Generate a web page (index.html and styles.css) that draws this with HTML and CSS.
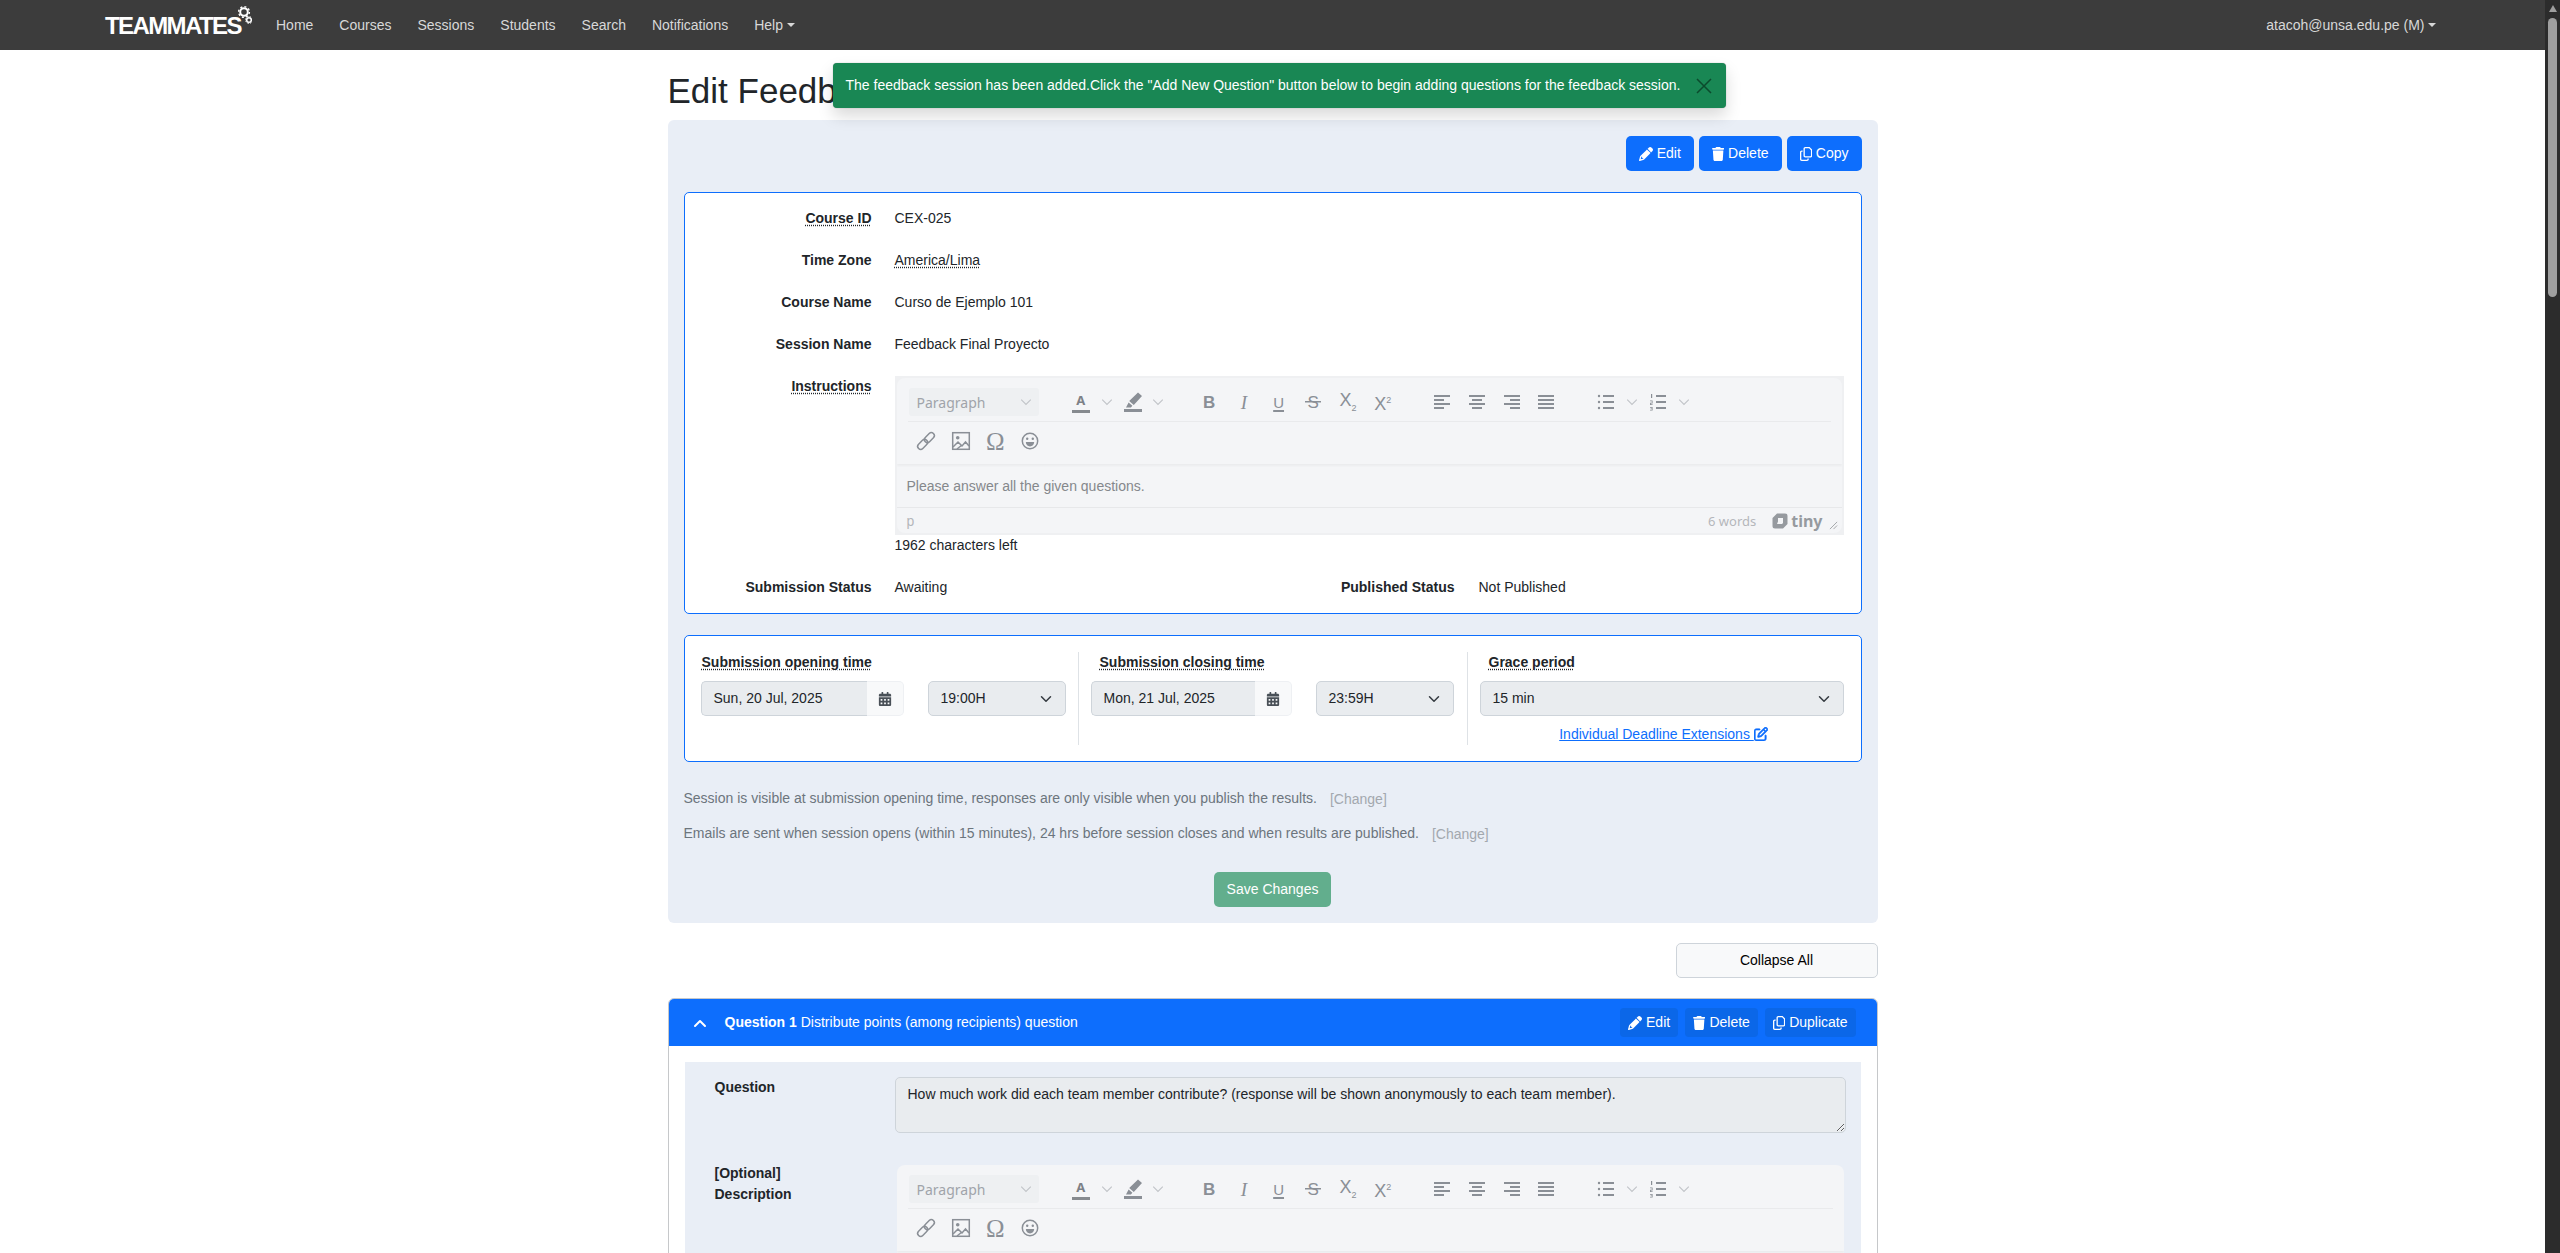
FILE: index.html
```html
<!DOCTYPE html>
<html>
<head>
  <meta charset="utf-8">
  <meta name="viewport" content="width=device-width">
  <link rel="stylesheet" href="styles.css">
  <title>Edit Feedback Session</title>
</head>
<body>
  <svg class="sprite" xmlns="http://www.w3.org/2000/svg">
    <symbol id="i-pencil" viewBox="0 0 512 512"><path fill="currentColor" d="M410.3 231l11.3-11.3-33.9-33.9-62.1-62.1L291.7 89.8l-11.3 11.3-22.6 22.6L58.6 322.9c-10.4 10.4-18 23.3-22.2 37.4L1 480.7c-2.5 8.4-.2 17.5 6.1 23.7s15.3 8.5 23.7 6.1l120.3-35.4c14.1-4.2 27-11.8 37.4-22.2L387.7 253.7 410.3 231zM160 399.4l-9.1 22.7c-4 3.1-8.5 5.4-13.3 6.9L59.4 452l23-78.1c1.4-4.9 3.8-9.4 6.9-13.3l22.7-9.1v32c0 8.8 7.2 16 16 16h32zM362.7 18.7L348.3 33.2 325.7 55.8 314.3 67.1l33.9 33.9 62.1 62.1 33.9 33.9 11.3-11.3 22.6-22.6 14.5-14.5c25-25 25-65.5 0-90.5L453.3 18.7c-25-25-65.5-25-90.5 0z"/></symbol>
    <symbol id="i-trash" viewBox="0 0 448 512"><path fill="currentColor" d="M135.2 17.7L128 32H32C14.3 32 0 46.3 0 64S14.3 96 32 96H416c17.7 0 32-14.3 32-32s-14.3-32-32-32H320l-7.2-14.3C307.4 6.8 296.3 0 284.2 0H163.8c-12.1 0-23.2 6.8-28.6 17.7zM416 128H32L53.2 467c1.6 25.3 22.6 45 47.9 45H346.9c25.3 0 46.3-19.7 47.9-45L416 128z"/></symbol>
    <symbol id="i-copy" viewBox="0 0 448 512"><path fill="currentColor" d="M384 336H192c-8.8 0-16-7.2-16-16V64c0-8.8 7.2-16 16-16l140.1 0L400 115.9V320c0 8.8-7.2 16-16 16zM192 384H384c35.3 0 64-28.7 64-64V115.9c0-12.7-5.1-24.9-14.1-33.9L366.1 14.1c-9-9-21.2-14.1-33.9-14.1H192c-35.3 0-64 28.7-64 64V320c0 35.3 28.7 64 64 64zM64 128c-35.3 0-64 28.7-64 64V448c0 35.3 28.7 64 64 64H256c35.3 0 64-28.7 64-64V416H272v32c0 8.8-7.2 16-16 16H64c-8.8 0-16-7.2-16-16V192c0-8.8 7.2-16 16-16H96V128H64z"/></symbol>
    <symbol id="i-cal" viewBox="0 0 448 512"><path fill="currentColor" d="M0 464c0 26.5 21.5 48 48 48h352c26.5 0 48-21.5 48-48V192H0v272zm320-196c0-6.6 5.4-12 12-12h40c6.6 0 12 5.4 12 12v40c0 6.6-5.4 12-12 12h-40c-6.6 0-12-5.4-12-12v-40zm0 128c0-6.6 5.4-12 12-12h40c6.6 0 12 5.4 12 12v40c0 6.6-5.4 12-12 12h-40c-6.6 0-12-5.4-12-12v-40zM192 268c0-6.6 5.4-12 12-12h40c6.6 0 12 5.4 12 12v40c0 6.6-5.4 12-12 12h-40c-6.6 0-12-5.4-12-12v-40zm0 128c0-6.6 5.4-12 12-12h40c6.6 0 12 5.4 12 12v40c0 6.6-5.4 12-12 12h-40c-6.6 0-12-5.4-12-12v-40zM64 268c0-6.6 5.4-12 12-12h40c6.6 0 12 5.4 12 12v40c0 6.6-5.4 12-12 12H76c-6.6 0-12-5.4-12-12v-40zm0 128c0-6.6 5.4-12 12-12h40c6.6 0 12 5.4 12 12v40c0 6.6-5.4 12-12 12H76c-6.6 0-12-5.4-12-12v-40zM400 64h-48V16c0-8.8-7.2-16-16-16h-32c-8.8 0-16 7.2-16 16v48H160V16c0-8.8-7.2-16-16-16h-32c-8.8 0-16 7.2-16 16v48H48C21.5 64 0 85.5 0 112v48h448v-48c0-26.5-21.5-48-48-48z"/></symbol>
    <symbol id="i-edit" viewBox="0 0 512 512"><path fill="currentColor" stroke="currentColor" stroke-width="22" d="M441 58.9L453.1 71c9.4 9.4 9.4 24.6 0 33.9L424 134.1 377.9 88 407 58.9c9.4-9.4 24.6-9.4 33.9 0zM209.8 256.2L344 121.9 390.1 168 255.8 302.2c-2.9 2.9-6.5 5-10.4 6.1l-58.5 16.7 16.7-58.5c1.1-3.9 3.2-7.5 6.1-10.4zM373.1 25L175.8 222.2c-8.7 8.7-15 19.4-18.3 31.1l-28.6 100c-2.4 8.4-.1 17.4 6.1 23.6s15.2 8.5 23.6 6.1l100-28.6c11.8-3.4 22.5-9.7 31.1-18.3L487 138.9c28.1-28.1 28.1-73.7 0-101.8L474.9 25C446.8-3.1 401.2-3.1 373.1 25zM88 64C39.4 64 0 103.4 0 152V424c0 48.6 39.4 88 88 88H360c48.6 0 88-39.4 88-88V312c0-13.3-10.7-24-24-24s-24 10.7-24 24V424c0 22.1-17.9 40-40 40H88c-22.1 0-40-17.9-40-40V152c0-22.1 17.9-40 40-40H200c13.3 0 24-10.7 24-24s-10.7-24-24-24H88z"/></symbol>
    <symbol id="i-down" viewBox="0 0 16 16"><path fill="none" stroke="currentColor" stroke-width="2" stroke-linecap="round" stroke-linejoin="round" d="M2 5l6 6 6-6"/></symbol>
    <symbol id="i-chev" viewBox="0 0 10 10"><path fill="none" stroke="currentColor" stroke-width="1" d="M1 3l4 4 4-4"/></symbol>
    <symbol id="i-marker" viewBox="0 0 24 24"><path fill="currentColor" d="M17 2.500l4 3.600-8.200 9-4.600-4zM7.600 12.400l3.800 3.400-1.500 1.700H5z"/><rect fill="currentColor" x="3" y="19" width="18" height="3"/></symbol>
    <symbol id="i-left" viewBox="0 0 24 24"><path fill="currentColor" d="M4 5h16v2H4zM4 9h10v2H4zM4 13h16v2H4zM4 17h10v2H4z"/></symbol>
    <symbol id="i-center" viewBox="0 0 24 24"><path fill="currentColor" d="M4 5h16v2H4zM7 9h10v2H7zM4 13h16v2H4zM7 17h10v2H7z"/></symbol>
    <symbol id="i-right" viewBox="0 0 24 24"><path fill="currentColor" d="M4 5h16v2H4zM10 9h10v2H10zM4 13h16v2H4zM10 17h10v2H10z"/></symbol>
    <symbol id="i-justify" viewBox="0 0 24 24"><path fill="currentColor" d="M4 5h16v2H4zM4 9h16v2H4zM4 13h16v2H4zM4 17h16v2H4z"/></symbol>
    <symbol id="i-bullets" viewBox="0 0 24 24"><path fill="currentColor" d="M9 5h11v2H9zM9 11h11v2H9zM9 17h11v2H9z"/><circle fill="currentColor" cx="5" cy="6" r="1.2"/><circle fill="currentColor" cx="5" cy="12" r="1.2"/><circle fill="currentColor" cx="5" cy="18" r="1.2"/></symbol>
    <symbol id="i-numbers" viewBox="0 0 24 24"><path fill="currentColor" d="M10 5h10v2H10zM10 11h10v2H10zM10 17h10v2H10zM5 4h1.2v4H5zM4 10.5h2.6v3H4.8v.8h1.8v.7H4v-2.2h1.8v-1.6H4zM4 17h2.6v3.5H4v-.7h1.8v-.7H4.6v-.7h1.2v-.7H4z"/></symbol>
    <symbol id="i-link" viewBox="0 0 24 24"><g fill="none" stroke="currentColor" stroke-width="1.5" transform="rotate(-45 12 12)"><rect x="1.5" y="9" width="11.5" height="6" rx="3"/><rect x="11" y="9" width="11.5" height="6" rx="3"/></g></symbol>
    <symbol id="i-image" viewBox="0 0 24 24"><rect fill="none" stroke="currentColor" stroke-width="1.5" x="3.7" y="3.7" width="16.6" height="16.6"/><circle fill="currentColor" cx="8.7" cy="8.7" r="1.8"/><path fill="none" stroke="currentColor" stroke-width="1.5" d="M4 18l5-5 4 4 3.5-4 3.5 4M8 20l5-4"/></symbol>
    <symbol id="i-smile" viewBox="0 0 24 24"><circle fill="none" stroke="currentColor" stroke-width="1.5" cx="12" cy="12" r="7.7"/><circle fill="currentColor" cx="9.2" cy="9.8" r="1.2"/><circle fill="currentColor" cx="14.8" cy="9.8" r="1.2"/><path fill="currentColor" d="M7.8 13h8.4c0 2.6-2 4.4-4.2 4.4S7.8 15.600 7.800 13z"/></symbol>
    <symbol id="i-grip" viewBox="0 0 10 10"><path fill="none" stroke="currentColor" stroke-width="1" d="M1 9l8-8M5 9l4-4"/></symbol>
  </svg>

  <div class="page">
    <div class="page-main">
      <nav class="navbar">
        <a class="brand">
          <span class="brand-text">TEAMMATES</span>
          <svg class="brand-gears" width="14" height="22" viewBox="0 0 14 22">
            <circle cx="6" cy="7" r="3.8" fill="none" stroke="#fff" stroke-width="2"/>
            <circle cx="6" cy="7" r="5.4" fill="none" stroke="#fff" stroke-width="1.4" stroke-dasharray="2 2.2"/>
            <circle cx="11" cy="15" r="2.300" fill="none" stroke="#fff" stroke-width="1.500"/>
            <circle cx="11" cy="15" r="3.400" fill="none" stroke="#fff" stroke-width="1" stroke-dasharray="1.500 1.200"/>
          </svg>
        </a>
        <a class="nav-link">Home</a>
        <a class="nav-link">Courses</a>
        <a class="nav-link">Sessions</a>
        <a class="nav-link">Students</a>
        <a class="nav-link">Search</a>
        <a class="nav-link">Notifications</a>
        <a class="nav-link caret">Help</a>
        <a class="nav-link caret nav-user">atacoh@unsa.edu.pe (M)</a>
      </nav>

      <main class="container">
        <div class="toast">
          <span>The feedback session has been added.Click the "Add New Question" button below to begin adding questions for the feedback session.</span>
          <svg class="toast-close" width="16" height="16" viewBox="0 0 16 16"><path fill="none" stroke="currentColor" stroke-width="1.500" d="M1 1l14 14M15 1L1 15"/></svg>
        </div>

        <h1 class="title">Edit Feedback Session</h1>

        <section class="panel">
          <div class="panel-actions">
            <button class="btn"><svg class="ic14"><use href="#i-pencil"/></svg>Edit</button>
            <button class="btn"><svg class="ic12"><use href="#i-trash"/></svg>Delete</button>
            <button class="btn"><svg class="ic12"><use href="#i-copy"/></svg>Copy</button>
          </div>

          <div class="box info-box">
            <div class="info-row"><span class="label"><span class="dotted">Course ID</span></span><span>CEX-025</span></div>
            <div class="info-row"><span class="label">Time Zone</span><span><span class="dotted">America/Lima</span></span></div>
            <div class="info-row"><span class="label">Course Name</span><span>Curso de Ejemplo 101</span></div>
            <div class="info-row"><span class="label">Session Name</span><span>Feedback Final Proyecto</span></div>
            <div class="info-row">
              <span class="label"><span class="dotted">Instructions</span></span>
              <div>
                <div class="editor">
                  <div class="editor-inner">
                    <div class="toolbar">
                      <div class="tb-row">
                        <div class="tb-select"><span>Paragraph</span><svg class="chev"><use href="#i-chev"/></svg></div>
                        <div class="tb-group">
                          <span class="tb-btn tb-color">A</span><span class="tb-more"><svg class="chev"><use href="#i-chev"/></svg></span>
                          <span class="tb-btn"><svg class="ic24"><use href="#i-marker"/></svg></span><span class="tb-more"><svg class="chev"><use href="#i-chev"/></svg></span>
                        </div>
                        <div class="tb-group">
                          <span class="tb-btn tb-bold">B</span>
                          <span class="tb-btn tb-italic">I</span>
                          <span class="tb-btn tb-under">U</span>
                          <span class="tb-btn tb-strike">S</span>
                          <span class="tb-btn tb-x tb-x-sub"><span>X<sub>2</sub></span></span>
                          <span class="tb-btn tb-x tb-x-sup"><span>X<sup>2</sup></span></span>
                        </div>
                        <div class="tb-group">
                          <span class="tb-btn"><svg class="ic24"><use href="#i-left"/></svg></span>
                          <span class="tb-btn"><svg class="ic24"><use href="#i-center"/></svg></span>
                          <span class="tb-btn"><svg class="ic24"><use href="#i-right"/></svg></span>
                          <span class="tb-btn"><svg class="ic24"><use href="#i-justify"/></svg></span>
                        </div>
                        <div class="tb-group">
                          <span class="tb-btn"><svg class="ic24"><use href="#i-bullets"/></svg></span><span class="tb-more"><svg class="chev"><use href="#i-chev"/></svg></span>
                          <span class="tb-btn"><svg class="ic24"><use href="#i-numbers"/></svg></span><span class="tb-more"><svg class="chev"><use href="#i-chev"/></svg></span>
                        </div>
                      </div>
                      <div class="tb-row tb-row-2">
                        <span class="tb-btn"><svg class="ic24"><use href="#i-link"/></svg></span>
                        <span class="tb-btn"><svg class="ic24"><use href="#i-image"/></svg></span>
                        <span class="tb-btn tb-omega">Ω</span>
                        <span class="tb-btn"><svg class="ic24"><use href="#i-smile"/></svg></span>
                      </div>
                    </div>
                    <div class="editor-body">Please answer all the given questions.</div>
                    <div class="editor-status">
                      <span class="status-path">p</span>
                      <span class="status-words">6 words</span>
                      <span class="tiny-logo">
                        <svg width="16" height="16" viewBox="0 0 16 16"><path fill="#969a9f" fill-rule="evenodd" d="M5 .5h8a2.500 2.500 0 0 1 2.500 2.500v8L11 15.500H3A2.500 2.500 0 0 1 .5 13V5zM6 5v3.500L5 11h5l1-1V5z"/></svg>
                        <span>tiny</span>
                      </span>
                      <svg class="status-grip"><use href="#i-grip"/></svg>
                    </div>
                  </div>
                </div>
                <div class="chars-left">1962 characters left</div>
              </div>
            </div>
            <div class="info-row info-row-status">
              <span class="label">Submission Status</span><span>Awaiting</span>
              <span class="label">Published Status</span><span class="status-val">Not Published</span>
            </div>
          </div>

          <div class="box times-box">
            <div class="time-col time-col-1">
              <div class="time-label"><span class="dotted">Submission opening time</span></div>
              <div class="time-fields">
                <div class="date-group"><span class="date-value">Sun, 20 Jul, 2025</span><span class="date-addon"><svg class="ic14"><use href="#i-cal"/></svg></span></div>
                <div class="select select-time"><span>19:00H</span><svg class="down"><use href="#i-down"/></svg></div>
              </div>
            </div>
            <div class="time-col time-col-2">
              <div class="time-label time-label-in"><span class="dotted">Submission closing time</span></div>
              <div class="time-fields">
                <div class="date-group"><span class="date-value">Mon, 21 Jul, 2025</span><span class="date-addon"><svg class="ic14"><use href="#i-cal"/></svg></span></div>
                <div class="select select-time"><span>23:59H</span><svg class="down"><use href="#i-down"/></svg></div>
              </div>
            </div>
            <div class="time-col time-col-3">
              <div class="time-label time-label-in"><span class="dotted">Grace period</span></div>
              <div class="select"><span>15 min</span><svg class="down"><use href="#i-down"/></svg></div>
              <div class="deadline-link"><a>Individual Deadline Extensions <svg class="ic14 link-ic"><use href="#i-edit"/></svg></a></div>
            </div>
          </div>

          <p class="note">Session is visible at submission opening time, responses are only visible when you publish the results.<span class="change">[Change]</span></p>
          <p class="note">Emails are sent when session opens (within 15 minutes), 24 hrs before session closes and when results are published.<span class="change">[Change]</span></p>

          <div class="save-row"><button class="btn-save">Save Changes</button></div>
        </section>

        <div class="collapse-row"><button class="btn-collapse">Collapse All</button></div>

        <section class="q-card">
          <header class="q-head">
            <svg class="q-chevron" width="14" height="14" viewBox="0 0 14 14"><path fill="none" stroke="#fff" stroke-width="2" stroke-linecap="round" stroke-linejoin="round" d="M2 10l5-5 5 5"/></svg>
            <span class="q-title"><b>Question 1</b> Distribute points (among recipients) question</span>
            <div class="q-actions">
              <button class="btn-q"><svg class="ic14"><use href="#i-pencil"/></svg>Edit</button>
              <button class="btn-q"><svg class="ic12"><use href="#i-trash"/></svg>Delete</button>
              <button class="btn-q"><svg class="ic12"><use href="#i-copy"/></svg>Duplicate</button>
            </div>
          </header>
          <div class="q-body">
            <div class="q-panel">
              <div class="q-row">
                <span class="q-label">Question</span>
                <textarea class="q-text" readonly>How much work did each team member contribute? (response will be shown anonymously to each team member).</textarea>
              </div>
              <div class="q-row q-row-desc">
                <span class="q-label">[Optional]<br>Description</span>
                <div class="editor editor-q">
                  <div class="editor-inner">
                    <div class="toolbar">
                      <div class="tb-row">
                        <div class="tb-select"><span>Paragraph</span><svg class="chev"><use href="#i-chev"/></svg></div>
                        <div class="tb-group">
                          <span class="tb-btn tb-color">A</span><span class="tb-more"><svg class="chev"><use href="#i-chev"/></svg></span>
                          <span class="tb-btn"><svg class="ic24"><use href="#i-marker"/></svg></span><span class="tb-more"><svg class="chev"><use href="#i-chev"/></svg></span>
                        </div>
                        <div class="tb-group">
                          <span class="tb-btn tb-bold">B</span>
                          <span class="tb-btn tb-italic">I</span>
                          <span class="tb-btn tb-under">U</span>
                          <span class="tb-btn tb-strike">S</span>
                          <span class="tb-btn tb-x tb-x-sub"><span>X<sub>2</sub></span></span>
                          <span class="tb-btn tb-x tb-x-sup"><span>X<sup>2</sup></span></span>
                        </div>
                        <div class="tb-group">
                          <span class="tb-btn"><svg class="ic24"><use href="#i-left"/></svg></span>
                          <span class="tb-btn"><svg class="ic24"><use href="#i-center"/></svg></span>
                          <span class="tb-btn"><svg class="ic24"><use href="#i-right"/></svg></span>
                          <span class="tb-btn"><svg class="ic24"><use href="#i-justify"/></svg></span>
                        </div>
                        <div class="tb-group">
                          <span class="tb-btn"><svg class="ic24"><use href="#i-bullets"/></svg></span><span class="tb-more"><svg class="chev"><use href="#i-chev"/></svg></span>
                          <span class="tb-btn"><svg class="ic24"><use href="#i-numbers"/></svg></span><span class="tb-more"><svg class="chev"><use href="#i-chev"/></svg></span>
                        </div>
                      </div>
                      <div class="tb-row tb-row-2">
                        <span class="tb-btn"><svg class="ic24"><use href="#i-link"/></svg></span>
                        <span class="tb-btn"><svg class="ic24"><use href="#i-image"/></svg></span>
                        <span class="tb-btn tb-omega">Ω</span>
                        <span class="tb-btn"><svg class="ic24"><use href="#i-smile"/></svg></span>
                      </div>
                    </div>
                    <div class="editor-body"></div>
                  </div>
                </div>
              </div>
            </div>
          </div>
        </section>
      </main>
    </div>

    <div class="scrollbar">
      <div class="scroll-up"></div>
      <div class="scroll-thumb"></div>
    </div>
  </div>
</body>
</html>
```

FILE: styles.css
```css
* {
  box-sizing: border-box;
}
html, body {
  height: 100%;
  margin: 0;
  overflow: hidden;
}
body {
  background: #fff;
  color: #212529;
  font-family: "Liberation Sans", Arial, sans-serif;
  font-size: 14px;
  line-height: 21px;
}
.sprite {
  display: none;
}
.ic14 {
  width: 14px;
  height: 14px;
  flex: none;
}
.ic12 {
  width: 12.25px;
  height: 14px;
  flex: none;
}
.ic24 {
  width: 24px;
  height: 24px;
}
.dotted {
  text-decoration: underline dotted;
  text-underline-offset: 2px;
}

/* page + fake scrollbar */
.page {
  display: flex;
  height: 100vh;
}
.page-main {
  flex: 1;
  min-width: 0;
  height: 100%;
  overflow: hidden;
}
.scrollbar {
  width: 15px;
  flex: none;
  background: #2c2c2c;
  padding: 5px 3px 0;
}
.scroll-up {
  width: 0;
  height: 0;
  margin: 0 auto 6px;
  border-left: 4.5px solid transparent;
  border-right: 4.5px solid transparent;
  border-bottom: 7px solid #9f9f9f;
}
.scroll-thumb {
  height: 279px;
  background: #9f9f9f;
  border-radius: 5px;
}

/* navbar */
.navbar {
  display: flex;
  align-items: center;
  height: 50px;
  padding: 0 96px 0 105px;
  background: #3c3c3c;
}
.brand {
  display: flex;
  width: 158px;
  height: 50px;
  align-items: center;
  flex: none;
}
.brand-text {
  color: #fff;
  font-size: 24px;
  font-weight: 700;
  letter-spacing: -1.6px;
  line-height: 24px;
  margin-top: 1px;
}
.brand-gears {
  margin: -18px 0 0 -3px;
}
.nav-link {
  padding: 0 13px;
  color: #d8d8d8;
}
.caret::after {
  content: "";
  display: inline-block;
  margin-left: 3.500px;
  vertical-align: 3px;
  border-top: 4.200px solid;
  border-left: 4.200px solid transparent;
  border-right: 4.200px solid transparent;
}
.nav-user {
  margin-left: auto;
}

/* main column */
.container {
  position: relative;
  width: 1210px;
  margin: 0 auto;
  padding-top: 17px;
}
.toast {
  position: absolute;
  top: 13px;
  left: 165px;
  z-index: 5;
  display: flex;
  align-items: center;
  justify-content: space-between;
  width: 893px;
  height: 45px;
  padding: 0 14px 0 13px;
  background: #198754;
  color: #fff;
  border-radius: 4px;
  box-shadow: 0 8px 16px rgba(0, 0, 0, .15), 0 0 1px rgba(0, 0, 0, .4);
}
.toast-close {
  color: #0c4a2d;
}
.title {
  margin: 0 0 5px;
  font-size: 35px;
  font-weight: 400;
  line-height: 48px;
}
.panel {
  background: #e9eef6;
  border-radius: 6px;
  padding: 16px;
}
.panel-actions {
  display: flex;
  justify-content: flex-end;
  gap: 5px;
  margin-bottom: 21px;
}
.btn {
  display: flex;
  align-items: center;
  gap: 4px;
  height: 35px;
  padding: 0 13px;
  background: #0d6efd;
  color: #fff;
  border: 0;
  border-radius: 5px;
  font: inherit;
}
.box {
  background: #fff;
  border: 1px solid #0d6efd;
  border-radius: 5px;
}

/* session info */
.info-box {
  padding: 5px 0 4px;
}
.info-row {
  display: grid;
  grid-template-columns: 187px 1fr;
  column-gap: 23px;
  padding: 10px 17px 11px 0;
}
.label {
  font-weight: 700;
  text-align: right;
}
.info-row-status {
  grid-template-columns: 187px 350px 187px 1fr;
  padding-top: 10px;
}
.status-val {
  padding-left: 1px;
}
.chars-left {
  color: #212529;
}

/* tiny editor */
.editor {
  border: 2px solid #eff0f2;
  background: #eff0f2;
  color: #8a8f96;
}
.editor-inner {
  border-radius: 8px;
  background: #f4f5f7;
  overflow: hidden;
}
.toolbar {
  box-shadow: 0 2px 2px rgba(0, 0, 0, .04);
}
.tb-row {
  display: flex;
  height: 44px;
  margin: 0 11px;
  padding: 10px 0 0 1px;
  border-bottom: 1px solid #e9eaec;
}
.tb-row-2 {
  height: 42px;
  margin: 0;
  padding: 5px 0 0 12px;
  border-bottom: 0;
}
.tb-select {
  display: flex;
  align-items: center;
  justify-content: space-between;
  flex: none;
  width: 130px;
  height: 28px;
  padding: 0 7px 0 8px;
  background: #eef0f2;
  border-radius: 3px;
  color: #a0a4aa;
  font-family: "Noto Sans", "Open Sans", sans-serif;
  font-size: 14px;
}
.chev {
  width: 12px;
  height: 12px;
  color: #c2c5c9;
}
.tb-group {
  display: flex;
  margin-left: 25px;
}
.tb-btn {
  display: flex;
  align-items: center;
  justify-content: center;
  flex: none;
  width: 34.700px;
  height: 28px;
  color: #8a8f96;
}
.tb-more {
  display: flex;
  align-items: center;
  justify-content: center;
  flex: none;
  width: 17px;
  height: 28px;
}
.tb-color {
  font-family: "Noto Sans", sans-serif;
  font-size: 13px;
  font-weight: 700;
  line-height: 13px;
  height: 24px;
  margin-top: 2px;
  padding-bottom: 3px;
  background: linear-gradient(#868a8f, #868a8f) center bottom 1px / 18px 3px no-repeat;
  color: #7d8187;
}
.tb-bold {
  font-family: "Liberation Sans", sans-serif;
  font-size: 17px;
  font-weight: 700;
}
.tb-italic {
  font-family: "Liberation Serif", serif;
  font-size: 19px;
  font-style: italic;
}
.tb-under {
  font-family: "Liberation Sans", sans-serif;
  font-size: 15px;
  text-decoration: underline;
  text-underline-offset: 2px;
  text-decoration-thickness: 1.500px;
}
.tb-strike {
  font-family: "Liberation Sans", sans-serif;
  font-size: 17px;
  background: linear-gradient(#8a8f96, #8a8f96) center / 16px 1.500px no-repeat;
}
.tb-x {
  font-family: "Liberation Sans", sans-serif;
  font-size: 18px;
  line-height: 18px;
}
.tb-x-sub {
  padding-bottom: 4px;
}
.tb-x-sup {
  padding-top: 4px;
}
.tb-x sub, .tb-x sup {
  font-size: 9px;
  line-height: 0;
}
.tb-omega {
  font-family: "Liberation Serif", serif;
  font-size: 25px;
}
.editor-body {
  height: 44px;
  padding: 12px 10px;
  border-bottom: 1px solid #e7e8ea;
  color: #85888c;
}
.editor-status {
  display: flex;
  align-items: center;
  height: 25px;
  padding: 1px 4px 0 10px;
  color: #b4b7bb;
}
.status-path {
  margin-right: auto;
}
.status-words {
  font-family: "Noto Sans", sans-serif;
  font-size: 13px;
}
.tiny-logo {
  display: flex;
  align-items: center;
  gap: 3px;
  margin: 0 6px 0 16px;
  color: #969a9f;
  font-family: "Noto Sans", sans-serif;
  font-size: 16px;
  font-weight: 700;
}
.status-grip {
  width: 9px;
  height: 9px;
  margin-top: 8px;
  color: #9da0a4;
}

/* time boxes */
.times-box {
  display: grid;
  grid-template-columns: 394px 389px 1fr;
  height: 127px;
  margin-top: 21px;
  padding: 16px 0;
}
.time-col {
  padding: 0 12px;
  border-right: 1px solid #dee2e6;
}
.time-col-1 {
  padding-left: 16px;
}
.time-col-2 {
  padding-right: 13px;
}
.time-col-3 {
  padding-right: 17px;
  border-right: 0;
}
.time-label {
  font-weight: 700;
  margin-bottom: 8px;
  padding-left: 1px;
}
.time-label-in {
  padding-left: 9px;
}
.time-fields {
  display: flex;
  gap: 24px;
}
.date-group {
  display: flex;
  flex: 1;
  height: 35px;
}
.date-value {
  flex: 1;
  padding: 6px 12px;
  background: #e9ecef;
  border: 1px solid #ced4da;
  border-right: 0;
  border-radius: 5px 0 0 5px;
}
.date-addon {
  display: flex;
  align-items: center;
  justify-content: center;
  width: 37px;
  background: #f8f9fa;
  border: 1px solid #eef0f3;
  border-left: 0;
  border-radius: 0 5px 5px 0;
  color: #495057;
}
.select {
  display: flex;
  align-items: center;
  justify-content: space-between;
  height: 35px;
  padding: 0 13px 0 12px;
  background: #e9ecef;
  border: 1px solid #ced4da;
  border-radius: 5px;
}
.select-time {
  flex: 0 0 138px;
}
.down {
  width: 12px;
  height: 12px;
  color: #343a40;
}
.deadline-link {
  margin-top: 8px;
  padding-left: 4px;
  text-align: center;
}
.deadline-link a {
  color: #0d6efd;
  text-decoration: underline;
}
.link-ic {
  vertical-align: -2px;
}

/* notes + save */
.note {
  margin: 0 0 14px;
  color: #6c757d;
}
.times-box + .note {
  margin-top: 26px;
}
.change {
  margin-left: 13px;
  color: #a3a8ae;
  position: relative;
  top: 1px;
}
.save-row {
  display: flex;
  justify-content: center;
  margin-top: 28px;
}
.btn-save {
  width: 117px;
  height: 35px;
  background: #62ae8d;
  color: #fff;
  border: 0;
  border-radius: 5px;
  font: inherit;
}

/* collapse */
.collapse-row {
  display: flex;
  justify-content: flex-end;
  margin: 20px 0;
}
.btn-collapse {
  width: 202px;
  height: 35px;
  background: #f8f9fa;
  color: #000;
  border: 1px solid #ced4da;
  border-radius: 5px;
  font: inherit;
}

/* question card */
.q-card {
  border: 1px solid #c6c8ca;
  border-radius: 6px 6px 0 0;
  overflow: hidden;
}
.q-head {
  display: flex;
  align-items: center;
  height: 47px;
  padding: 0 21px 0 24px;
  background: #0d6efd;
  color: #fff;
}
.q-title {
  margin-left: 18px;
}
.q-actions {
  display: flex;
  gap: 7px;
  margin-left: auto;
}
.btn-q {
  display: flex;
  align-items: center;
  gap: 4px;
  height: 29px;
  padding: 0 8px;
  background: #0b67e8;
  color: #fff;
  border: 0;
  border-radius: 4px;
  font: inherit;
}
.q-body {
  padding: 16px 16px 0;
}
.q-panel {
  background: #e9eef6;
  padding: 15px 15px 20px 30px;
}
.q-row {
  display: grid;
  grid-template-columns: 180px 1fr;
}
.q-row-desc {
  margin-top: 30px;
}
.q-label {
  font-weight: 700;
}
.q-text {
  display: block;
  width: 100%;
  height: 56px;
  padding: 6px 12px;
  background: #e9ecef;
  color: #212529;
  border: 1px solid #ced4da;
  border-radius: 5px;
  font: inherit;
  resize: vertical;
  outline: 0;
}
.editor-q {
  background: #e9eef6;
  border-color: #e9eef6;
}
.editor-q .editor-body {
  height: 200px;
}
```
